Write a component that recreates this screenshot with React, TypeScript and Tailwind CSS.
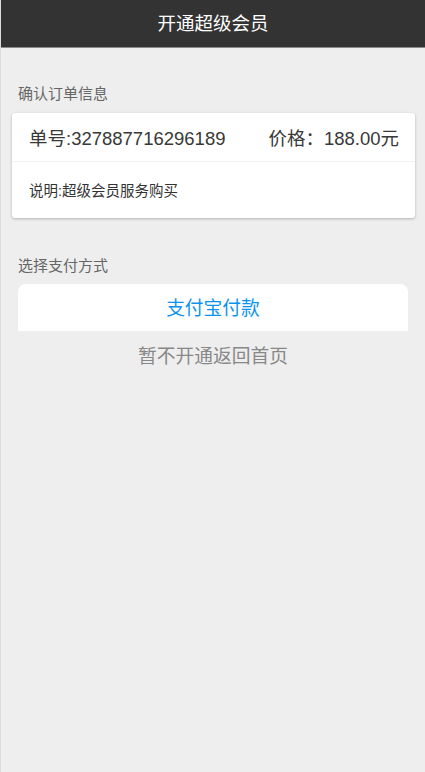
import React from "react";

const font = { fontFamily: '"Liberation Sans", "Noto Sans CJK SC", sans-serif' };

export default function App() {
  return (
    <div style={font} className="min-h-[772px] border-l border-[#dcdcdc] bg-[#eeeeee]">
      <header className="flex h-[48px] items-center justify-center border-b border-[#8a8a8a] bg-[#333333]">
        <h1 className="text-[18.5px] text-white">开通超级会员</h1>
      </header>

      <div className="pt-[36px]">
        <p className="pl-[17px] text-[15px] leading-[20px] text-[#666666]">确认订单信息</p>
        <div className="mt-[9px] ml-[11px] mr-[10px] rounded-[3px] bg-white shadow-[0_1px_3px_rgba(0,0,0,0.25)]">
          <div className="flex h-[49px] items-center justify-between border-b border-[#f2f2f2] pt-[3px] pl-[17px] pr-[16px] text-[18.5px] text-[#383838]">
            <span>单号:327887716296189</span>
            <span>价格：188.00元</span>
          </div>
          <div className="flex h-[56px] items-center pt-[4px] pl-[17px] text-[14.5px] text-[#333333]">
            说明:超级会员服务购买
          </div>
        </div>
      </div>

      <div className="pt-[38px]">
        <p className="pl-[17px] text-[15px] leading-[20px] text-[#666666]">选择支付方式</p>
        <div className="mx-[17px] mt-[8px] overflow-hidden rounded-[8px]">
          <button className="flex h-[47px] w-full items-center justify-center bg-white pt-[4px] text-[18.75px] text-[#0c93f0]">
            支付宝付款
          </button>
          <button className="flex h-[50px] w-full items-center justify-center bg-[#eeeeee] pt-[3px] text-[18.75px] text-[#888888]">
            暂不开通返回首页
          </button>
        </div>
      </div>
    </div>
  );
}
